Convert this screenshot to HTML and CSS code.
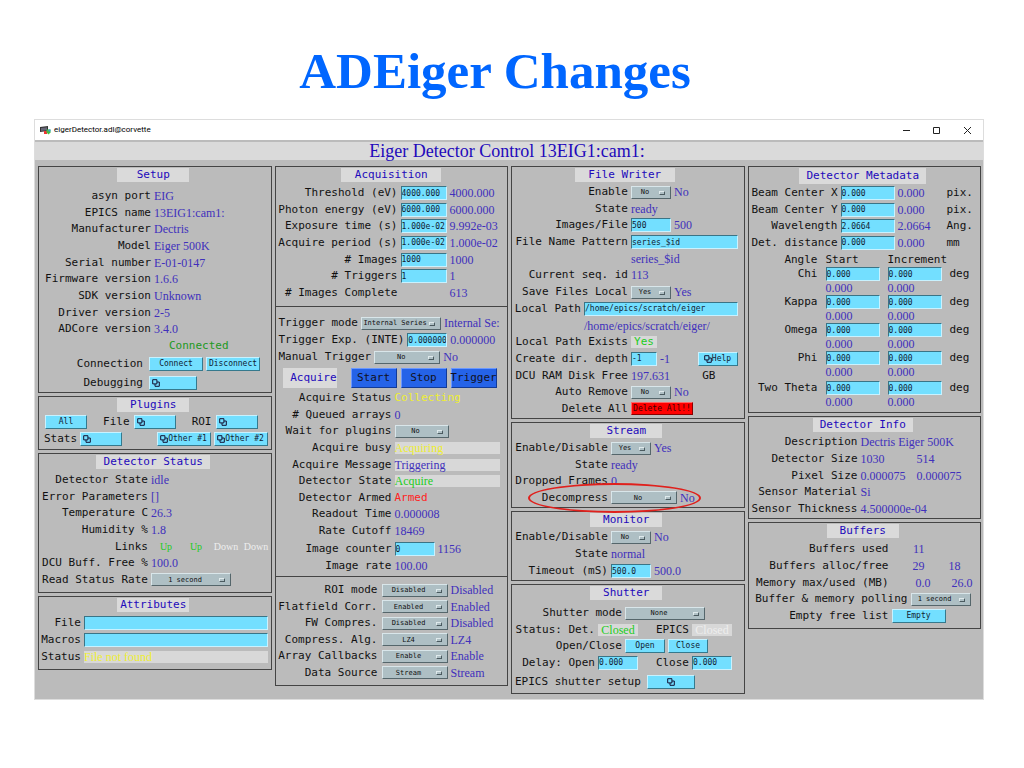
FILE: index.html
```html
<!DOCTYPE html>
<html lang="en">
<head>
<meta charset="utf-8">
<title>ADEiger Changes</title>
<link rel="stylesheet" href="styles.css">
</head>
<body>
<svg class="defs" aria-hidden="true">
  <symbol id="dup" viewBox="0 0 8 8"><path d="M.7.7h4.2v4.2H.7zM3 5v2.3h4.3V3H5" fill="none" stroke="#113" stroke-width="1"/></symbol>
</svg>
<h1 class="slide-title">ADEiger Changes</h1>
<main class="window">
  <header class="titlebar">
    <svg class="app-icon" viewBox="0 0 11 9"><path d="M0 1l8-1v5L0 6z" fill="#333"/><path d="M1 2l6-.7v3L1 5z" fill="#667"/><path d="M4 5h3v3H4z" fill="#e33"/><path d="M6.500 3.500h4v3l-2 2-2-2z" fill="#4b4"/><path d="M8.500 3.500h2v2h-2z" fill="#39d"/></svg>
    <span class="app-name">eigerDetector.adl@corvette</span>
    <svg class="win-buttons" viewBox="0 0 70 10"><path d="M1 5.500h7M31.500 2.500h6v6h-6zM62 2l7 7M69 2l-7 7" fill="none" stroke="#222" stroke-width="1"/></svg>
  </header>
  <h2 class="screen-title">Eiger Detector Control 13EIG1:cam1:</h2>
  <div class="columns">

    <div class="column">
      <section class="panel setup">
        <h3 class="cap">Setup</h3>
        <div class="rows">
          <div class="row"><span class="l">asyn port</span><span class="v">EIG</span></div>
          <div class="row"><span class="l">EPICS name</span><span class="v">13EIG1:cam1:</span></div>
          <div class="row"><span class="l">Manufacturer</span><span class="v">Dectris</span></div>
          <div class="row"><span class="l">Model</span><span class="v">Eiger 500K</span></div>
          <div class="row"><span class="l">Serial number</span><span class="v">E-01-0147</span></div>
          <div class="row"><span class="l">Firmware version</span><span class="v">1.6.6</span></div>
          <div class="row"><span class="l">SDK version</span><span class="v">Unknown</span></div>
          <div class="row"><span class="l">Driver version</span><span class="v">2-5</span></div>
          <div class="row"><span class="l">ADCore version</span><span class="v">3.4.0</span></div>
          <div class="row connected">Connected</div>
        </div>
        <div class="row command"><span class="l">Connection</span><button class="btn w54">Connect</button><button class="btn w54">Disconnect</button></div>
        <div class="row command"><span class="l">Debugging</span><button class="btn w48 start" aria-label="Debugging"><svg class="dup"><use href="#dup"/></svg></button></div>
      </section>

      <section class="panel plugins">
        <h3 class="cap">Plugins</h3>
        <div class="row split"><button class="btn w42">All</button><span class="pair"><span>File</span><button class="btn w42 start" aria-label="File"><svg class="dup"><use href="#dup"/></svg></button></span><span class="pair"><span>ROI</span><button class="btn w42 start" aria-label="ROI"><svg class="dup"><use href="#dup"/></svg></button></span></div>
        <div class="row stats"><span>Stats</span><button class="btn w42 start" aria-label="Stats"><svg class="dup"><use href="#dup"/></svg></button><button class="btn w54 push"><svg class="dup"><use href="#dup"/></svg>Other #1</button><button class="btn w54"><svg class="dup"><use href="#dup"/></svg>Other #2</button></div>
      </section>

      <section class="panel status">
        <h3 class="cap wide">Detector Status</h3>
        <div class="rows">
          <div class="row"><span class="l">Detector State</span><span class="v">idle</span></div>
          <div class="row"><span class="l">Error Parameters</span><span class="v">[]</span></div>
          <div class="row"><span class="l">Temperature C</span><span class="v">26.3</span></div>
          <div class="row"><span class="l">Humidity %</span><span class="v">1.8</span></div>
          <div class="row"><span class="l">Links</span><span class="v links"><span class="ok">Up</span><span class="ok">Up</span><span class="off">Down</span><span class="off">Down</span></span></div>
          <div class="row"><span class="l">DCU Buff. Free %</span><span class="v">100.0</span></div>
          <div class="row"><label class="l" for="rate">Read Status Rate</label><span class="pick w80"><select id="rate"><option>1 second</option></select></span></div>
        </div>
      </section>

      <section class="panel attributes">
        <h3 class="cap">Attributes</h3>
        <div class="rows">
          <div class="row"><label class="l" for="af">File</label><input class="fill" id="af"></div>
          <div class="row"><label class="l" for="am">Macros</label><input class="fill" id="am"></div>
          <div class="row"><span class="l">Status</span><span class="v bar warn">File not found</span></div>
        </div>
      </section>
    </div>

    <div class="column">
      <section class="panel control">
        <div class="acquisition">
          <h3 class="cap medium">Acquisition</h3>
          <div class="rows">
            <div class="row"><label class="l" for="th">Threshold (eV)</label><input class="w46" id="th" value="4000.000"><span class="v">4000.000</span></div>
            <div class="row"><label class="l" for="pe">Photon energy (eV)</label><input class="w46" id="pe" value="6000.000"><span class="v">6000.000</span></div>
            <div class="row"><label class="l" for="et">Exposure time (s)</label><input class="w46" id="et" value="1.000e-02"><span class="v">9.992e-03</span></div>
            <div class="row"><label class="l" for="ap">Acquire period (s)</label><input class="w46" id="ap" value="1.000e-02"><span class="v">1.000e-02</span></div>
            <div class="row"><label class="l" for="ni"># Images</label><input class="w46" id="ni" value="1000"><span class="v">1000</span></div>
            <div class="row"><label class="l" for="nt"># Triggers</label><input class="w46" id="nt" value="1"><span class="v">1</span></div>
            <div class="row"><span class="l"># Images Complete</span><span class="w46"></span><span class="v">613</span></div>
          </div>
        </div>
        <div class="trigger">
          <div class="rows">
            <div class="row"><label for="tm">Trigger mode</label><span class="pick w80"><select id="tm"><option>Internal Series</option></select></span><span class="v">Internal Se:</span></div>
            <div class="row"><label for="te">Trigger Exp. (INTE)</label><input class="w40" id="te" value="0.000000"><span class="v">0.000000</span></div>
            <div class="row"><label for="mt">Manual Trigger</label><span class="pick w66"><select id="mt"><option>No</option></select></span><span class="v">No</span></div>
          </div>
          <div class="row acquire"><span class="acquire-label">Acquire</span><button class="btn blue">Start</button><button class="btn blue">Stop</button><button class="btn blue">Trigger</button></div>
          <div class="rows state">
            <div class="row"><span class="l">Acquire Status</span><span class="mono warn">Collecting</span></div>
            <div class="row"><span class="l"># Queued arrays</span><span class="v">0</span></div>
            <div class="row"><label class="l" for="wp">Wait for plugins</label><span class="pick w54"><select id="wp"><option>No</option></select></span></div>
            <div class="row"><span class="l">Acquire busy</span><span class="v bar warn">Acquiring</span></div>
            <div class="row"><span class="l">Acquire Message</span><span class="v bar">Triggering</span></div>
            <div class="row"><span class="l">Detector State</span><span class="v bar ok">Acquire</span></div>
            <div class="row"><span class="l">Detector Armed</span><span class="mono alarm">Armed</span></div>
            <div class="row"><span class="l">Readout Time</span><span class="v">0.000008</span></div>
            <div class="row"><span class="l">Rate Cutoff</span><span class="v">18469</span></div>
          </div>
          <div class="rows counter">
            <div class="row"><label class="l" for="ic">Image counter</label><input class="w40" id="ic" value="0"><span class="v">1156</span></div>
            <div class="row"><span class="l">Image rate</span><span class="v">100.00</span></div>
          </div>
        </div>
        <div class="modes">
          <div class="rows">
            <div class="row"><label class="l" for="rm">ROI mode</label><span class="pick w66"><select id="rm"><option>Disabled</option></select></span><span class="v">Disabled</span></div>
            <div class="row"><label class="l" for="fc">Flatfield Corr.</label><span class="pick w66"><select id="fc"><option>Enabled</option></select></span><span class="v">Enabled</span></div>
            <div class="row"><label class="l" for="fw">FW Compres.</label><span class="pick w66"><select id="fw"><option>Disabled</option></select></span><span class="v">Disabled</span></div>
            <div class="row"><label class="l" for="ca">Compress. Alg.</label><span class="pick w66"><select id="ca"><option>LZ4</option></select></span><span class="v">LZ4</span></div>
            <div class="row"><label class="l" for="ac">Array Callbacks</label><span class="pick w66"><select id="ac"><option>Enable</option></select></span><span class="v">Enable</span></div>
            <div class="row"><label class="l" for="ds">Data Source</label><span class="pick w66"><select id="ds"><option>Stream</option></select></span><span class="v">Stream</span></div>
          </div>
        </div>
      </section>
    </div>

    <div class="column">
      <section class="panel writer">
        <h3 class="cap medium">File Writer</h3>
        <div class="rows">
          <div class="row"><label class="l" for="we">Enable</label><span class="pick w40"><select id="we"><option>No</option></select></span><span class="v">No</span></div>
          <div class="row"><span class="l">State</span><span class="v">ready</span></div>
          <div class="row"><label class="l" for="if">Images/File</label><input class="w40" id="if" value="500"><span class="v">500</span></div>
          <div class="row"><label class="l" for="np">File Name Pattern</label><input class="fill" id="np" value="series_$id"></div>
          <div class="row"><span class="l"></span><span class="v">series_$id</span></div>
          <div class="row"><span class="l">Current seq. id</span><span class="v">113</span></div>
          <div class="row"><label class="l" for="sl">Save Files Local</label><span class="pick w40"><select id="sl"><option>Yes</option></select></span><span class="v">Yes</span></div>
          <div class="row path"><label class="l" for="lp">Local Path</label><input class="fill" id="lp" value="/home/epics/scratch/eiger"></div>
          <div class="row path"><span class="l"></span><span class="v">/home/epics/scratch/eiger/</span></div>
          <div class="row"><span class="l">Local Path Exists</span><span class="mono plate w26 ok">Yes</span></div>
          <div class="row"><label class="l" for="cd">Create dir. depth</label><input class="w26" id="cd" value="-1"><span class="v">-1</span><button class="btn w40 push"><svg class="dup"><use href="#dup"/></svg>Help</button></div>
          <div class="row"><span class="l">DCU RAM Disk Free</span><span class="v">197.631</span><span class="push unit-gb">GB</span></div>
          <div class="row"><label class="l" for="ar">Auto Remove</label><span class="pick w40"><select id="ar"><option>No</option></select></span><span class="v">No</span></div>
          <div class="row"><span class="l">Delete All</span><button class="btn red">Delete All!!</button></div>
        </div>
      </section>

      <section class="panel stream">
        <h3 class="cap">Stream</h3>
        <div class="rows">
          <div class="row"><label class="l" for="se">Enable/Disable</label><span class="pick w40"><select id="se"><option>Yes</option></select></span><span class="v">Yes</span></div>
          <div class="row"><span class="l">State</span><span class="v">ready</span></div>
          <div class="row"><span class="l">Dropped Frames</span><span class="v">0</span></div>
          <div class="row marked"><label class="l" for="dc">Decompress</label><span class="pick w66"><select id="dc"><option>No</option></select></span><span class="v">No</span></div>
        </div>
      </section>

      <section class="panel monitor">
        <h3 class="cap">Monitor</h3>
        <div class="rows">
          <div class="row"><label class="l" for="me">Enable/Disable</label><span class="pick w40"><select id="me"><option>No</option></select></span><span class="v">No</span></div>
          <div class="row"><span class="l">State</span><span class="v">normal</span></div>
          <div class="row"><label class="l" for="to">Timeout (mS)</label><input class="w40" id="to" value="500.0"><span class="v">500.0</span></div>
        </div>
      </section>

      <section class="panel shutter">
        <h3 class="cap">Shutter</h3>
        <div class="rows">
          <div class="row mode"><label class="l" for="sm">Shutter mode</label><span class="pick w80"><select id="sm"><option>None</option></select></span></div>
          <div class="row"><span class="l">Status: Det.</span><span class="v plate w40 ok">Closed</span><span class="l second">EPICS</span><span class="v plate w40 off">Closed</span></div>
          <div class="row mode"><span class="l">Open/Close</span><button class="btn w40">Open</button><button class="btn w40">Close</button></div>
          <div class="row"><label class="l" for="do">Delay: Open</label><input class="w40" id="do" value="0.000"><label class="l second" for="dl">Close</label><input class="w40" id="dl" value="0.000"></div>
        </div>
        <div class="row epics"><span>EPICS shutter setup</span><button class="btn w48" aria-label="EPICS shutter setup"><svg class="dup"><use href="#dup"/></svg></button></div>
      </section>
    </div>

    <div class="column">
      <section class="panel metadata">
        <h3 class="cap large">Detector Metadata</h3>
        <div class="rows">
          <div class="row"><label class="l" for="bx">Beam Center X</label><input class="w54" id="bx" value="0.000"><span class="v">0.000</span><span class="unit">pix.</span></div>
          <div class="row"><label class="l" for="by">Beam Center Y</label><input class="w54" id="by" value="0.000"><span class="v">0.000</span><span class="unit">pix.</span></div>
          <div class="row"><label class="l" for="wl">Wavelength</label><input class="w54" id="wl" value="2.0664"><span class="v">2.0664</span><span class="unit">Ang.</span></div>
          <div class="row"><label class="l" for="dd">Det. distance</label><input class="w54" id="dd" value="0.000"><span class="v">0.000</span><span class="unit">mm</span></div>
        </div>
        <div class="angles">
          <span class="l">Angle</span><span>Start</span><span>Increment</span><span></span>
          <span class="l">Chi</span><input aria-label="Chi start" value="0.000"><input aria-label="Chi increment" value="0.000"><span>deg</span>
          <span></span><span class="v">0.000</span><span class="v">0.000</span><span></span>
          <span class="l">Kappa</span><input aria-label="Kappa start" value="0.000"><input aria-label="Kappa increment" value="0.000"><span>deg</span>
          <span></span><span class="v">0.000</span><span class="v">0.000</span><span></span>
          <span class="l">Omega</span><input aria-label="Omega start" value="0.000"><input aria-label="Omega increment" value="0.000"><span>deg</span>
          <span></span><span class="v">0.000</span><span class="v">0.000</span><span></span>
          <span class="l">Phi</span><input aria-label="Phi start" value="0.000"><input aria-label="Phi increment" value="0.000"><span>deg</span>
          <span></span><span class="v">0.000</span><span class="v">0.000</span><span></span>
        </div>
        <div class="angles">
          <span class="l">Two Theta</span><input aria-label="Two Theta start" value="0.000"><input aria-label="Two Theta increment" value="0.000"><span>deg</span>
          <span></span><span class="v">0.000</span><span class="v">0.000</span><span></span>
        </div>
      </section>

      <section class="panel info">
        <h3 class="cap medium">Detector Info</h3>
        <div class="rows">
          <div class="row"><span class="l">Description</span><span class="v">Dectris Eiger 500K</span></div>
          <div class="row"><span class="l">Detector Size</span><span class="v half">1030</span><span class="v">514</span></div>
          <div class="row"><span class="l">Pixel Size</span><span class="v half">0.000075</span><span class="v">0.000075</span></div>
          <div class="row"><span class="l">Sensor Material</span><span class="v">Si</span></div>
          <div class="row"><span class="l">Sensor Thickness</span><span class="v">4.500000e-04</span></div>
        </div>
      </section>

      <section class="panel buffers">
        <h3 class="cap">Buffers</h3>
        <div class="rows">
          <div class="row"><span class="l">Buffers used</span><span class="v num">11</span></div>
          <div class="row"><span class="l">Buffers alloc/free</span><span class="v num">29</span><span class="v num">18</span></div>
          <div class="row"><span class="l">Memory max/used (MB)</span><span class="v num wide">0.0</span><span class="v num wide">26.0</span></div>
          <div class="row polling"><label class="l" for="bp">Buffer &amp; memory polling</label><span class="pick w60"><select id="bp"><option>1 second</option></select></span></div>
          <div class="row"><span class="l">Empty free list</span><button class="btn w54">Empty</button></div>
        </div>
      </section>
    </div>
  </div>
</main>
</body>
</html>
```
FILE: styles.css
```css
*, *::before, *::after { box-sizing: border-box; }
body {
  margin: 0;
  background: #fff;
  color: #111;
  font: 11px/16px "DejaVu Sans Mono", "Liberation Mono", monospace;
}
.defs { display: block; width: 0; height: 0; }
.slide-title {
  margin: 0;
  padding: 41px 34px 18px 0;
  text-align: center;
  color: #06f;
  font: bold 51px/60px "Liberation Serif", serif;
}
.window {
  margin: 0 40px 0 34px;
  border: 1px solid #ddd;
  background: #bbb;
  min-height: 581px;
}
.titlebar {
  display: flex;
  align-items: center;
  height: 20px;
  padding: 0 11px 0 5px;
  background: #fff;
}
.app-icon { width: 11px; height: 9px; margin-right: 3px; }
.app-name { font: 8px/12px Roboto, "Noto Sans", sans-serif; color: #000; }
.win-buttons { width: 70px; height: 10px; margin-left: auto; }
.screen-title {
  margin: 2px 0 6px;
  padding-right: 4px;
  background: #dadada;
  text-align: center;
  color: #2209bb;
  font: 18px/18px "Liberation Serif", serif;
}
.columns {
  display: grid;
  grid-template-columns: repeat(4, minmax(0, 1fr));
  gap: 3px;
  padding: 0 2px 2px 3px;
}
.column { display: flex; flex-direction: column; gap: 3px; }
.panel { border: 1px solid #444; padding: 1px 3px 1px 0; }
.cap {
  width: 72px;
  margin: 0 auto 5px;
  background: #dadada;
  text-align: center;
  color: #2209bb;
  font: 11px/14px "DejaVu Sans Mono", monospace;
  white-space: nowrap;
}
.cap.medium { width: 100px; }
.cap.wide { width: 114px; }
.cap.large { width: 127px; }

.rows { display: flex; flex-direction: column; justify-content: space-between; }
.row { display: flex; align-items: center; height: 16px; gap: 3px; white-space: nowrap; }
.l { flex: none; text-align: right; }
.v { color: #4030bb; font: 12px/14px "Liberation Serif", serif; white-space: nowrap; }
.mono { font: 11px/14px "DejaVu Sans Mono", monospace; }
.ok { color: #2c2; }
.off { color: #eee; }
.warn { color: #ee3; }
.alarm { color: #f22; }
.bar { flex: 1; height: 12px; line-height: 12px; background: #d8d8d8; }
.plate { height: 12px; line-height: 12px; background: #d8d8d8; text-align: center; }
.fill { flex: 1; }
.push { margin-left: auto; }

.w26 { width: 26px; }
.w40 { width: 40px; }
.w42 { width: 42px; }
.w46 { width: 46px; }
.w48 { width: 48px; }
.w54 { width: 54px; }
.w60 { width: 60px; }
.w66 { width: 66px; }
.w80 { width: 80px; }

input {
  min-width: 0;
  height: 14px;
  margin: 0;
  padding: 0;
  border: 1px solid;
  border-color: #3a7486 #c8f2ff #c8f2ff #3a7486;
  border-radius: 0;
  background: #73dfff;
  color: #123;
  font: 8px/12px "DejaVu Sans Mono", monospace;
}
.btn {
  display: flex;
  align-items: center;
  justify-content: center;
  height: 14px;
  padding: 0;
  border: 1px solid;
  border-color: #c8f2ff #35798d #35798d #c8f2ff;
  border-radius: 0;
  background: #73dfff;
  color: #123;
  font: 8px/10px "DejaVu Sans Mono", monospace;
  white-space: nowrap;
}
.btn.start { justify-content: flex-start; padding-left: 2px; }
.dup { flex: none; width: 8px; height: 8px; }
.pick { position: relative; display: flex; height: 13px; }
.pick::after {
  content: "";
  position: absolute;
  right: 6px;
  top: 5px;
  width: 6px;
  height: 4px;
  border: 1px solid;
  border-color: #dfeaec #4b5b60 #4b5b60 #dfeaec;
  pointer-events: none;
}
select {
  appearance: none;
  width: 100%;
  height: 13px;
  margin: 0;
  padding: 0 12px 0 0;
  border: 1px solid;
  border-color: #d9e6ea #55666b #55666b #d9e6ea;
  border-radius: 0;
  background: #aebfc4;
  color: #111;
  font: 7px/10px "DejaVu Sans Mono", monospace;
  text-align: center;
  text-align-last: center;
}

/* Setup */
.setup { min-height: 227px; padding-bottom: 0; }
.setup .cap { margin-bottom: 6px; }
.setup .l { width: 112px; }
.setup .rows { min-height: 166px; }
.connected { padding-left: 130px; color: #292; }
.command { height: 19px; }
.command .l { width: 104px; margin-right: 3px; }

/* Plugins */
.plugins { min-height: 54px; }
.plugins .cap { margin-bottom: 1px; }
.plugins .row { height: 17px; padding-left: 5px; }
.plugins .split { justify-content: space-between; padding: 0 10px 0 6px; }
.pair { display: flex; align-items: center; gap: 4px; }

/* Detector Status */
.status { min-height: 140px; }
.status .cap { margin-bottom: 3px; }
.status .l { width: 109px; }
.status .rows { min-height: 116px; }
.links { display: grid; grid-template-columns: repeat(4, 30px); text-align: center; font-size: 10px; }

/* Attributes */
.attributes { min-height: 74px; }
.attributes .cap { margin-bottom: 3px; }
.attributes .l { width: 42px; }
.attributes .rows { min-height: 50px; }

/* Acquisition column */
.control { padding: 0; }
.acquisition { min-height: 139px; padding-top: 1px; }
.acquisition .cap { margin-bottom: 3px; }
.acquisition .l { width: 122px; }
.acquisition .rows { min-height: 116px; }
.trigger { min-height: 270px; padding: 8px 3px 0; border-top: 1px solid #444; }
.trigger .rows { min-height: 50px; }
.trigger .l { width: 113px; }
.acquire { height: 22px; padding-left: 4px; gap: 4px; margin-top: 2px; }
.acquire-label {
  width: 54px;
  margin-right: 10px;
  background: #dadada;
  text-align: right;
  color: #2209bb;
  line-height: 20px;
}
.btn.blue {
  width: 46px;
  height: 20px;
  border-color: #6b98ff #123a96 #123a96 #6b98ff;
  background: #2563e8;
  color: #112;
  font-size: 11px;
}
.trigger .state { min-height: 149px; margin-top: 1px; }
.trigger .counter { min-height: 33px; margin-top: 2px; }
.trigger .bar { margin-right: 4px; }
.modes { min-height: 109px; padding-top: 5px; border-top: 1px solid #444; }
.modes .l { width: 102px; margin-right: 1px; }
.modes .rows { min-height: 99px; }

/* File Writer */
.writer { min-height: 253px; padding-right: 6px; }
.writer .cap { margin-bottom: 2px; }
.writer .l { width: 116px; }
.writer .path .l { width: 69px; }
.writer .rows { min-height: 233px; }
.unit-gb { margin-right: 22px; }
.btn.red {
  width: 62px;
  height: 13px;
  border-color: #f66 #800 #800 #f66;
  background: #f00;
  color: #400;
}

/* Stream, Monitor */
.stream { min-height: 86px; }
.stream .cap { margin-bottom: 2px; }
.stream .l, .monitor .l { width: 96px; }
.stream .rows { min-height: 66px; }
.marked { position: relative; }
.marked::after {
  content: "";
  position: absolute;
  left: 16px;
  top: -7px;
  width: 173px;
  height: 30px;
  border: 2px solid #e0201c;
  border-radius: 50%;
  z-index: 1;
  pointer-events: none;
}
.monitor { min-height: 70px; }
.monitor .cap { margin-bottom: 2px; }
.monitor .rows { min-height: 50px; }

/* Shutter */
.shutter { min-height: 110px; }
.shutter .cap { margin-bottom: 5px; }
.shutter .l { width: 83px; }
.shutter .l.second { width: 48px; }
.shutter .mode .l { width: 110px; }
.shutter .rows { min-height: 66px; }
.shutter .epics { height: 21px; padding-left: 3px; gap: 6px; }

/* Detector Metadata */
.metadata { min-height: 247px; }
.metadata .cap { line-height: 16px; margin-bottom: 1px; }
.metadata .row .l { width: 89px; }
.metadata .row .v { width: 46px; }
.metadata .rows { min-height: 66px; margin-bottom: 2px; }
.angles {
  display: grid;
  grid-template-columns: 69px 54px 54px 1fr;
  grid-auto-rows: 14px;
  column-gap: 8px;
  align-items: center;
  line-height: 14px;
}
.angles + .angles { margin-top: 2px; }

/* Detector Info */
.info { min-height: 103px; }
.info .cap { margin-bottom: 2px; }
.info .l { width: 109px; }
.info .rows { min-height: 83px; }
.half { width: 53px; }

/* Buffers */
.buffers { min-height: 107px; }
.buffers .cap { margin-bottom: 3px; }
.buffers .l { width: 140px; }
.buffers .polling .l { width: 159px; }
.buffers .rows { min-height: 83px; }
.num { width: 33px; text-align: right; }
.num.wide { width: 39px; }
```
